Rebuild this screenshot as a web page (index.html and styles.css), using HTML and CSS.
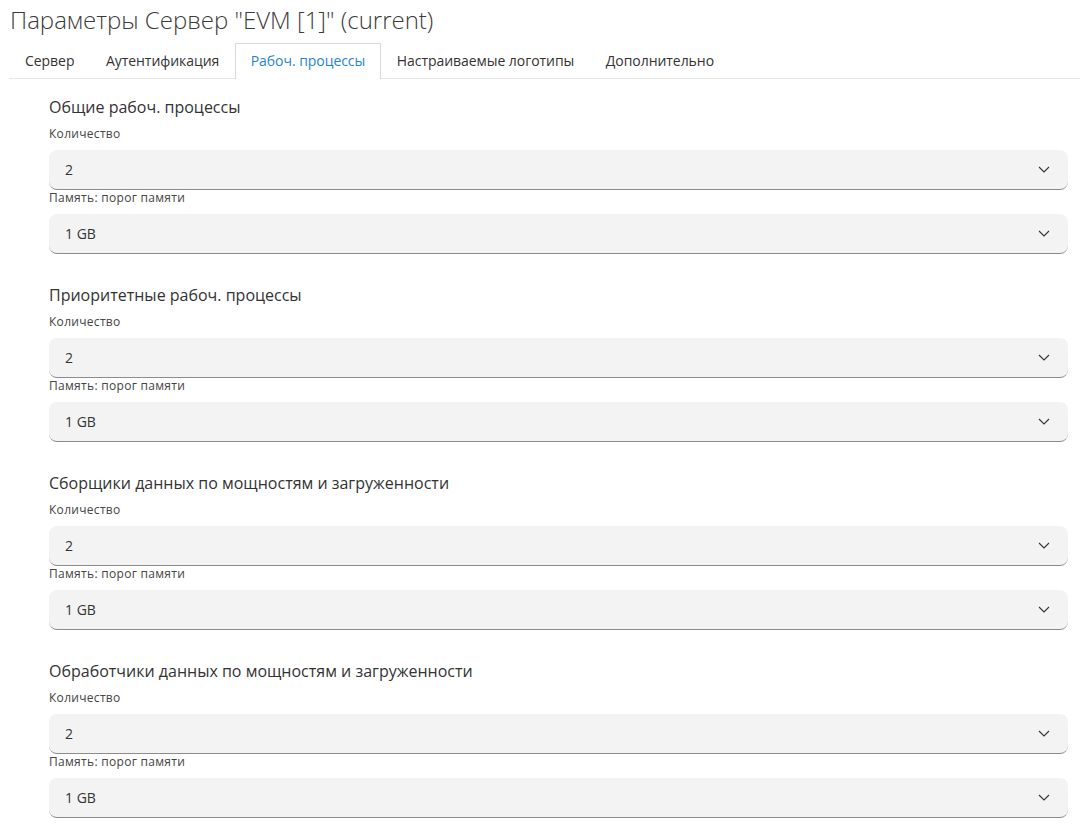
FILE: index.html
```html
<!DOCTYPE html>
<html lang="ru">
<head>
<meta charset="utf-8">
<title>Параметры Сервер</title>
<link rel="stylesheet" href="styles.css">
</head>
<body>
<div class="page">
  <h1 class="title">Параметры Сервер "EVM [1]" (current)</h1>
  <nav class="tabs">
    <span class="tab">Сервер</span>
    <span class="tab">Аутентификация</span>
    <span class="tab tab-active">Рабоч. процессы</span>
    <span class="tab">Настраиваемые логотипы</span>
    <span class="tab">Дополнительно</span>
  </nav>
  <main class="content">
    <section class="group">
      <h2 class="group-title">Общие рабоч. процессы</h2>
      <div class="field">
        <label class="field-label">Количество</label>
        <div class="select"><span class="select-value">2</span><svg class="chevron" width="12" height="7" viewBox="0 0 12 7"><path d="M1 1l5 5 5-5" fill="none" stroke="#333" stroke-width="1.1"/></svg></div>
      </div>
      <div class="field">
        <label class="field-label">Память: порог памяти</label>
        <div class="select"><span class="select-value">1 GB</span><svg class="chevron" width="12" height="7" viewBox="0 0 12 7"><path d="M1 1l5 5 5-5" fill="none" stroke="#333" stroke-width="1.1"/></svg></div>
      </div>
    </section>
    <section class="group">
      <h2 class="group-title">Приоритетные рабоч. процессы</h2>
      <div class="field">
        <label class="field-label">Количество</label>
        <div class="select"><span class="select-value">2</span><svg class="chevron" width="12" height="7" viewBox="0 0 12 7"><path d="M1 1l5 5 5-5" fill="none" stroke="#333" stroke-width="1.1"/></svg></div>
      </div>
      <div class="field">
        <label class="field-label">Память: порог памяти</label>
        <div class="select"><span class="select-value">1 GB</span><svg class="chevron" width="12" height="7" viewBox="0 0 12 7"><path d="M1 1l5 5 5-5" fill="none" stroke="#333" stroke-width="1.1"/></svg></div>
      </div>
    </section>
    <section class="group">
      <h2 class="group-title">Сборщики данных по мощностям и загруженности</h2>
      <div class="field">
        <label class="field-label">Количество</label>
        <div class="select"><span class="select-value">2</span><svg class="chevron" width="12" height="7" viewBox="0 0 12 7"><path d="M1 1l5 5 5-5" fill="none" stroke="#333" stroke-width="1.1"/></svg></div>
      </div>
      <div class="field">
        <label class="field-label">Память: порог памяти</label>
        <div class="select"><span class="select-value">1 GB</span><svg class="chevron" width="12" height="7" viewBox="0 0 12 7"><path d="M1 1l5 5 5-5" fill="none" stroke="#333" stroke-width="1.1"/></svg></div>
      </div>
    </section>
    <section class="group">
      <h2 class="group-title">Обработчики данных по мощностям и загруженности</h2>
      <div class="field">
        <label class="field-label">Количество</label>
        <div class="select"><span class="select-value">2</span><svg class="chevron" width="12" height="7" viewBox="0 0 12 7"><path d="M1 1l5 5 5-5" fill="none" stroke="#333" stroke-width="1.1"/></svg></div>
      </div>
      <div class="field">
        <label class="field-label">Память: порог памяти</label>
        <div class="select"><span class="select-value">1 GB</span><svg class="chevron" width="12" height="7" viewBox="0 0 12 7"><path d="M1 1l5 5 5-5" fill="none" stroke="#333" stroke-width="1.1"/></svg></div>
      </div>
    </section>
  </main>
</div>
</body>
</html>
```
FILE: styles.css
```css
* { box-sizing: border-box; }
html, body { margin: 0; padding: 0; background: #fff; }
body {
  font-family: "Open Sans", "Noto Sans", sans-serif;
  color: #333;
}
.page { display: flex; flex-direction: column; }
.title {
  margin: 4px 0 0 10px;
  font-size: 24px;
  line-height: 32px;
  font-weight: 300;
  color: #3b3b3b;
}
.tabs {
  display: flex;
  align-items: flex-start;
  margin: 7px 0 0 9px;
  border-bottom: 1px solid #e6e6e6;
}
.tab {
  font-size: 14px;
  line-height: 20px;
  letter-spacing: -0.05px;
  padding: 7px 14.5px 7px 15px;
  border: 1px solid transparent;
  border-bottom: none;
  color: #333;
  white-space: nowrap;
}
.tab-active {
  color: #1f84cf;
  border-color: #dadada;
  background: #fff;
  padding-bottom: 8px;
  margin-bottom: -1px;
}
.content {
  display: flex;
  flex-direction: column;
  gap: 30px;
  padding: 17px 12px 0 49px;
}
.group { display: flex; flex-direction: column; }
.group-title {
  margin: 0 0 8px;
  font-size: 16px;
  line-height: 22px;
  font-weight: 400;
  color: #333;
}
.field { display: flex; flex-direction: column; }
.field-label {
  font-size: 12px;
  line-height: 16px;
  letter-spacing: 0.3px;
  color: #444;
  margin-bottom: 8px;
}
.select {
  display: flex;
  align-items: center;
  justify-content: space-between;
  height: 40px;
  padding: 0 18px 0 16px;
  background: #f3f3f3;
  border-radius: 8px;
  border-bottom: 1px solid #8c8c8c;
  font-size: 14px;
  color: #333;
}
.chevron { display: block; }
```
